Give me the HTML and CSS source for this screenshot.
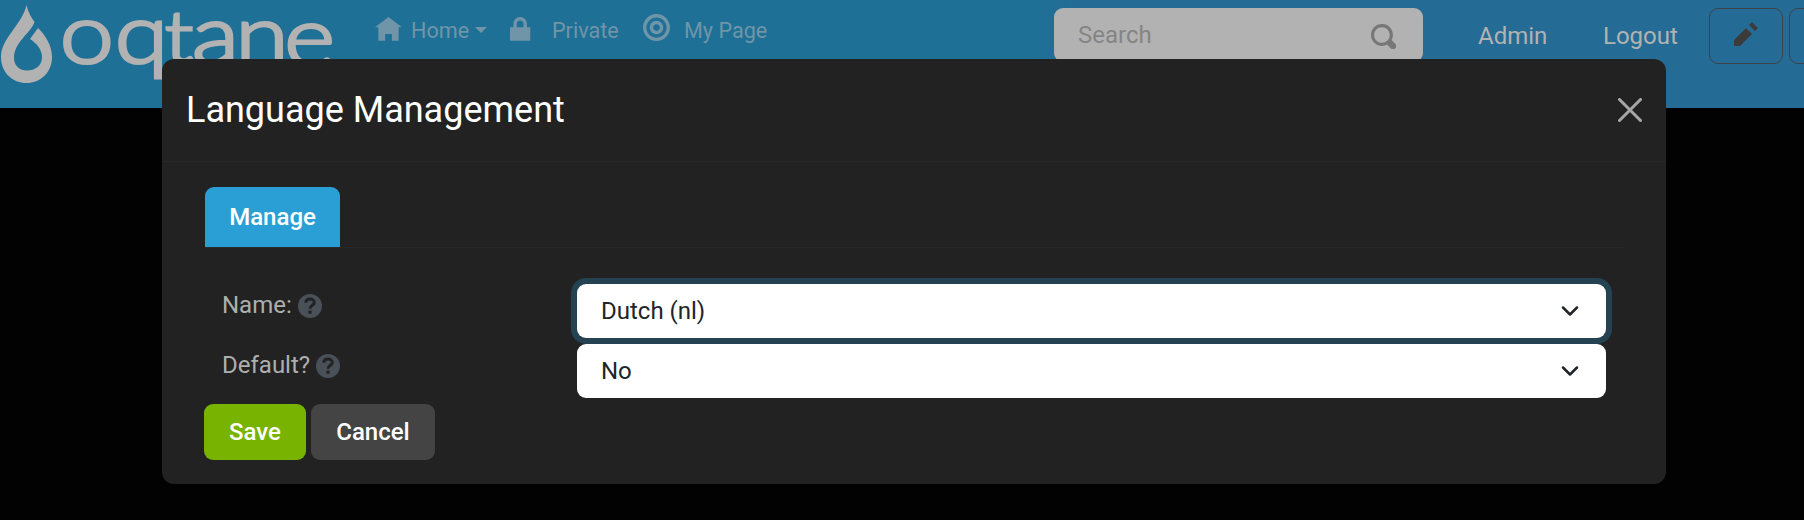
FILE: index.html
```html
<!DOCTYPE html>
<html lang="en">
<head>
<meta charset="utf-8">
<title>Language Management</title>
<link rel="stylesheet" href="styles.css">
</head>
<body>
<header class="topbar">
  <svg class="logo" width="345" height="90" viewBox="0 0 345 90" role="img" aria-label="oqtane">
    <path class="drop" d="M26.500 5C28 12 31 17 34.500 22C31 33 14 42 14 58C14 66 20 70.500 27 70.500C35 70.500 42 66 42 57C42 49 36 43 30 39L38 28C46 36 52 46 52 57C52 73 40 83 26.500 83C13 83 1 73 1 57C1 38 22 25 26.500 5Z"/>
    <text class="wordmark" transform="scale(1.17 1)" x="51 98 141 164 201 243" y="62.500 62.500 62 63.500 64 65.500">oq<tspan class="t">t</tspan>ane</text>
  </svg>
  <nav class="nav">
    <a class="nav-home"><svg width="27" height="27" viewBox="0 0 8 8"><path d="M4 0l-4 3h1v4h2v-2h2v2h2v-4.030l1 .03-4-3z"/></svg><span>Home</span><i class="caret"></i></a>
    <a class="nav-private"><svg width="27" height="27" viewBox="0 0 8 8"><path d="M3 0c-1.100 0-2 .9-2 2v1h-1v4h6v-4h-1v-1c0-1.100-.9-2-2-2zm0 1c.56 0 1 .44 1 1v1h-2v-1c0-.56.44-1 1-1z"/></svg><span>Private</span></a>
    <a class="nav-page"><svg class="target" width="27" height="27" viewBox="0 0 8 8"><path d="M4 0c-2.200 0-4 1.800-4 4s1.800 4 4 4 4-1.800 4-4-1.800-4-4-4zm0 1c1.660 0 3 1.340 3 3s-1.340 3-3 3-3-1.340-3-3 1.340-3 3-3zm0 1c-1.100 0-2 .9-2 2s.9 2 2 2 2-.9 2-2-.9-2-2-2zm0 1c.56 0 1 .44 1 1s-.44 1-1 1-1-.44-1-1 .44-1 1-1z"/></svg><span>My Page</span></a>
  </nav>
  <div class="search"><span>Search</span><svg width="25" height="25" viewBox="0 0 8 8"><path d="M3.500 0c-1.930 0-3.500 1.570-3.500 3.500s1.570 3.500 3.500 3.500c.59 0 1.170-.14 1.660-.41a1 1 0 0 0 .13.13l1 1a1.020 1.020 0 1 0 1.440-1.440l-1-1a1 1 0 0 0-.16-.13c.27-.49.44-1.060.44-1.660 0-1.930-1.550-3.500-3.500-3.500zm0 1c1.390 0 2.500 1.110 2.500 2.500 0 .66-.24 1.270-.66 1.720-.01.01-.02.02-.03.03a1 1 0 0 0-.13.13c-.44.4-1.040.63-1.690.63-1.390 0-2.500-1.110-2.500-2.500s1.110-2.500 2.500-2.500z"/></svg></div>
  <a class="user-link admin">Admin</a>
  <a class="user-link logout">Logout</a>
  <div class="tools">
    <div class="tool"><svg width="24" height="24" viewBox="0 0 8 8"><path d="M6 0l-1 1 2 2 1-1-2-2zm-2 2l-4 4v2h2l4-4-2-2z"/></svg></div>
    <div class="tool"></div>
  </div>
</header>
<section class="modal">
  <div class="modal-header">
    <h1>Language Management</h1>
    <svg class="close" width="24" height="24" viewBox="0 0 24 24"><path d="M1.500 1.500L22.500 22.500M22.500 1.500L1.500 22.500"/></svg>
  </div>
  <div class="modal-body">
    <div class="tabs"><a class="tab">Manage</a></div>
    <div class="form">
      <div class="row">
        <label><span>Name:</span><svg class="help" width="24" height="24" viewBox="0 0 24 24"><circle cx="12" cy="12" r="12"/><path d="M7.800 8.700C8 3.700 16.300 3.900 16.300 8.400C16.300 11.500 12 11.300 12 14.700"/><rect x="10.400" y="16.600" width="3.200" height="3.200" rx="1"/></svg></label>
        <div class="select focused"><span>Dutch (nl)</span><svg width="18" height="12" viewBox="0 0 18 12"><path d="M2 2.500L9 9.500L16 2.500"/></svg></div>
      </div>
      <div class="row">
        <label><span>Default?</span><svg class="help" width="24" height="24" viewBox="0 0 24 24"><circle cx="12" cy="12" r="12"/><path d="M7.800 8.700C8 3.700 16.300 3.900 16.300 8.400C16.300 11.500 12 11.300 12 14.700"/><rect x="10.400" y="16.600" width="3.200" height="3.200" rx="1"/></svg></label>
        <div class="select"><span>No</span><svg width="18" height="12" viewBox="0 0 18 12"><path d="M2 2.500L9 9.500L16 2.500"/></svg></div>
      </div>
    </div>
    <div class="actions"><button class="btn save">Save</button><button class="btn cancel">Cancel</button></div>
  </div>
</section>
</body>
</html>
```
FILE: styles.css
```css
* { box-sizing: border-box; }
body { margin: 0; height: 520px; overflow: hidden; background: #020202; font: 24px/36px Roboto, sans-serif; }
svg { display: block; flex: none; }

.topbar { display: flex; align-items: flex-start; width: 1804px; height: 108px; overflow: hidden; background: linear-gradient(90deg, #1e7096 0, #1e7096 1030px, #246c96 1080px); }
.logo { fill: #b2b2b2; }
.wordmark { font: 300 83px Lato, sans-serif; stroke: #b2b2b2; stroke-width: 3px; }
.wordmark .t { font-size: 70px; }

.nav { display: flex; flex: none; padding: 13px 0 0 30px; width: 709px; color: #7095a8; font-size: 21.600px; }
.nav svg { fill: #7095a8; margin-top: 4px; }
.nav .target { margin-top: 1px; }
.nav a { display: flex; flex: none; white-space: nowrap; }
.nav-home { width: 135px; }
.nav-home span { margin-left: 9px; }
.nav-private { width: 133px; }
.nav-private span { margin-left: 15px; }
.nav-page span { margin-left: 14px; }
.caret { margin: 14px 0 0 6px; width: 0; height: 0; border: 6px solid transparent; border-top-color: #7095a8; border-bottom: 0; }

.search { display: flex; flex: none; justify-content: space-between; width: 369px; height: 54px; margin-top: 8px; padding: 9px 26px 0 24px; border-radius: 9px; background: #b2b2b2; color: #858585; }
.search svg { margin: 7px 1px 0 0; fill: #777; }
.user-link { flex: none; margin-top: 18px; color: #b2b2b2; white-space: nowrap; }
.admin { width: 125px; margin-left: 55px; }
.logout { width: 106px; }
.tools { display: flex; flex: none; gap: 6px; margin-top: 8px; }
.tool { display: flex; flex: none; align-items: center; justify-content: center; width: 74px; height: 56px; padding-bottom: 4px; border: 1px solid #3c4246; border-radius: 9px; }
.tool svg { fill: #3b3b3b; }

.modal { position: absolute; left: 162px; top: 59px; width: 1504px; height: 425px; border-radius: 12px; background: #222; }
.modal-header { display: flex; justify-content: space-between; height: 103px; padding: 24px 24px 0; border-bottom: 1px solid #282828; }
h1 { margin: 0; color: #fff; font-size: 36px; line-height: 54px; font-weight: 400; }
.close { margin-top: 15px; fill: none; stroke: #a7a7a7; stroke-width: 3; stroke-linecap: round; }
.modal-body { padding: 25px 42px 0; }
.tabs { display: flex; height: 61px; border-bottom: 1px solid #282828; margin-left: 1px; }
.tab { width: 135px; height: 60px; border-radius: 9px 9px 0 0; background: #2a9fd6; color: #fff; font-weight: 500; line-height: 60px; text-align: center; }
.form { display: flex; flex-direction: column; gap: 6px; margin-top: 36px; padding: 0 18px; }
.row { display: flex; height: 54px; }
label { display: flex; width: 355px; color: #adafae; padding-top: 3px; }
.help { margin: 7px 0 0 6px; }
.help circle { fill: #495057; }
.help path { fill: none; stroke: #222; stroke-width: 3; }
.help rect { fill: #222; }
.select { display: flex; justify-content: space-between; flex: 1; padding: 9px 27px 0 24px; border-radius: 9px; background: #fff; color: #212529; }
.select svg { margin-top: 12px; fill: none; stroke: #212529; stroke-width: 2.500; stroke-linecap: round; stroke-linejoin: round; }
.focused { box-shadow: 0 0 0 6px #254252; }
.row + .row .select { position: relative; }
.actions { display: flex; gap: 5px; margin-top: 6px; }
.btn { height: 56px; border: 0; border-radius: 9px; color: #fff; font: 500 24px Roboto, sans-serif; padding: 0; }
.save { width: 102px; background: #77b300; }
.cancel { width: 124px; background: #444; }
```
